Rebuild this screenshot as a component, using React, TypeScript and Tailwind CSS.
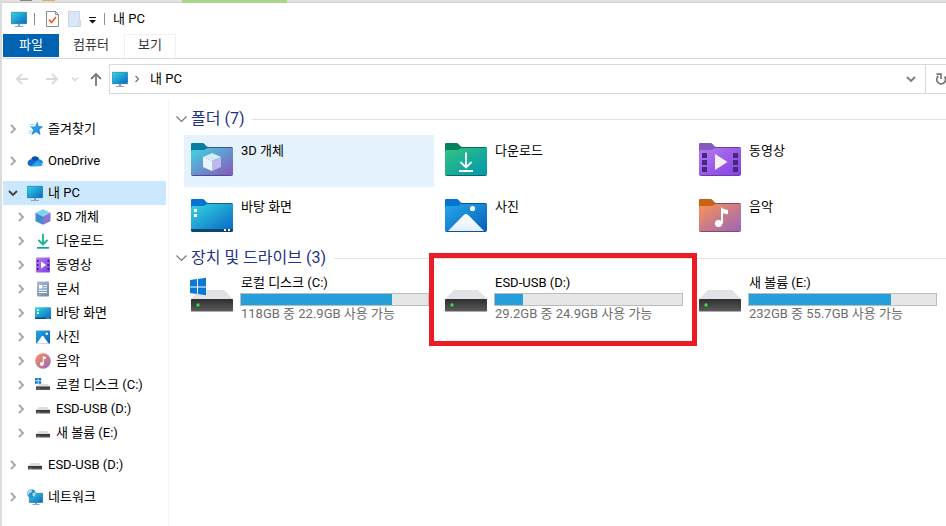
import type { ReactNode } from 'react'

type IconProps = { className?: string }

function Gradients() {
  const stops: [string, string, string][] = [
    ['g-screen', '#33d6e4', '#0a66c2'],
    ['g-3d', '#3fd6e0', '#8a55bd'],
    ['g-down', '#33c481', '#0098ad'],
    ['g-video', '#b47af2', '#8440e2'],
    ['g-photo', '#27a8ea', '#0560bb'],
    ['g-music', '#fb9355', '#9a66bb'],
    ['g-doc', '#a9bed3', '#6a88a6'],
    ['g-star', '#3fb8f5', '#0f7fe0'],
  ]
  return (
    <svg className="absolute h-0 w-0" aria-hidden="true">
      <defs>
        {stops.map(([id, from, to]) => (
          <linearGradient key={id} id={id} x1="0" y1="0" x2="1" y2="1">
            <stop offset="0" stopColor={from} />
            <stop offset="1" stopColor={to} />
          </linearGradient>
        ))}
        <linearGradient id="g-drive" x1="0" y1="0" x2="0" y2="1">
          <stop offset="0" stopColor="#2e2e2e" />
          <stop offset="1" stopColor="#5c5c5c" />
        </linearGradient>
        <linearGradient id="g-snow" x1="0" y1="0" x2="0" y2="1">
          <stop offset="0" stopColor="#ffffff" />
          <stop offset="1" stopColor="#e3effc" />
        </linearGradient>
      </defs>
    </svg>
  )
}

function Small({ children }: { children: ReactNode }) {
  return (
    <svg viewBox="0 0 16 16" className="h-4 w-4 shrink-0" aria-hidden="true">
      {children}
    </svg>
  )
}

const MonitorIcon = () => (
  <Small>
    <path d="M4 15h8v1H4zM7 13h2v2H7z" fill="#8fa3b5" />
    <rect x="0.3" y="1.3" width="15.4" height="11.4" rx="0.6" fill="url(#g-screen)" stroke="#0f6f9e" strokeWidth="0.6" />
  </Small>
)

const StarIcon = () => (
  <Small>
    <path d="M10.4 1.3l.9 4.2 4.2.3-3.4 2.7 1 5-4-2.7-4.2 2.7 1.6-4.6-2.2-2.6 4-.5z" fill="url(#g-star)" stroke="#1676cf" strokeWidth="0.6" />
    <path d="M3.5 3.5h4M3 5.5h3.5M2 10h3M1.5 12h3" stroke="#6cc4f5" strokeWidth="0.8" />
  </Small>
)

const CloudIcon = () => (
  <Small>
    <path d="M4 6.3A4.4 4.4 0 0 1 12.3 6.2L8 9z" fill="#0a4fa6" />
    <path d="M3.2 13.2A3.4 3.4 0 1 1 5.3 6.4L12 11l-3 2.2z" fill="#1069cf" />
    <path d="M8.5 8.4c1.2-1.5 2.8-2.6 4-2.1 2 .3 3.5 1.7 3.5 3.6l-3 1.5z" fill="#1a8be0" />
    <path d="M3.2 13.2L9.2 8.9c1-.6 1.9-.2 2.5.2l4.1 2.4c-.4 1.1-1.4 1.7-2.6 1.7z" fill="#2aa5ee" />
  </Small>
)

const CubeIcon = () => (
  <Small>
    <path d="M8 0.3l7.5 3.4L8 7.4.5 3.7z" fill="#7fd3ee" />
    <path d="M.5 3.7L8 7.4v8.3L.5 12.2z" fill="#3b8fd0" />
    <path d="M15.5 3.7L8 7.4v8.3l7.5-3.5z" fill="#8a78cf" />
  </Small>
)

const DownloadIcon = () => (
  <Small>
    <path d="M8 .8v10.4M3.4 7l4.6 4.5L12.6 7" fill="none" stroke="#1bb196" strokeWidth="1.8" />
    <path d="M2 14h12v1.7H2z" fill="#14a39c" />
  </Small>
)

const VideoIcon = () => (
  <Small>
    <rect x="1" y="0.5" width="14" height="15" rx="0.8" fill="url(#g-video)" />
    <path d="M2 3h1.500v2H2zM2 7h1.500v2H2zM2 11h1.500v2H2zM12.500 3H14v2h-1.500zM12.500 7H14v2h-1.500zM12.500 11H14v2h-1.500z" fill="#3c2370" />
    <path d="M6 4.6l5.2 3.4L6 11.4z" fill="#fff" />
  </Small>
)

const DocumentIcon = () => (
  <Small>
    <rect x="2" y="0.5" width="12" height="15" rx="0.8" fill="url(#g-doc)" />
    <path d="M4 4h3.5v3.5H4zM8.5 4H12v1H8.5zM8.5 6.3H12v1H8.5zM4 8.8h8v1H4zM4 11h8v1H4z" fill="#fff" />
  </Small>
)

const DesktopIcon = () => (
  <Small>
    <rect x="0" y="2.3" width="16" height="11.7" rx="0.6" fill="url(#g-screen)" />
    <path d="M2 4.3h1.8v1.6H2zM2 7.3h1.8v1.6H2z" fill="#fff" />
    <path d="M0 12.6h16v1a.5.5 0 0 1-.5.5H.5a.5.5 0 0 1-.5-.5z" fill="#0b4f7e" />
    <path d="M11.5 12.8h1v.8h-1zM13.5 12.8h1v.8h-1z" fill="#fff" />
  </Small>
)

const PhotoIcon = () => (
  <Small>
    <rect x="1" y="1.5" width="14" height="13" rx="0.5" fill="url(#g-photo)" />
    <path d="M1.6 14.5L6.8 7.2q.8-.8 1.6 0l5.2 7.3z" fill="#fff" />
    <circle cx="11.8" cy="4.7" r="1.2" fill="#fff" />
  </Small>
)

const MusicIcon = () => (
  <Small>
    <circle cx="8" cy="8" r="7.8" fill="url(#g-music)" />
    <circle cx="6.8" cy="11" r="1.9" fill="#fff" />
    <path d="M7.8 3l3.1 1.3v2L8.8 5.5V11h-1z" fill="#fff" />
  </Small>
)

const DriveIcon = () => (
  <Small>
    <path d="M4 6h8l3 3H1z" fill="#dcdde1" />
    <rect x="1" y="9" width="14" height="3.6" rx="0.3" fill="url(#g-drive)" />
    <rect x="3" y="10.6" width="1.2" height="1.2" fill="#3fe03f" />
  </Small>
)

const SystemDriveIcon = () => (
  <Small>
    <path d="M4 7h9l2 2.4H1z" fill="#dcdde1" />
    <rect x="1" y="9.4" width="14" height="3.6" rx="0.3" fill="url(#g-drive)" />
    <rect x="3" y="11" width="1.2" height="1.2" fill="#3fe03f" />
    <path d="M0 1h2.7v2.5H0zM3.4 1h2.8v2.5H3.4zM0 4.2h2.7v2.5H0zM3.4 4.2h2.8v2.5H3.4z" fill="#0a78d4" />
  </Small>
)

const NetworkIcon = () => (
  <Small>
    <path d="M5.5 15h7v1h-7zM8 13.5h2V15H8z" fill="#8fa3b5" />
    <rect x="2.3" y="4.3" width="13.4" height="9.2" rx="0.5" fill="url(#g-screen)" stroke="#0f6f9e" strokeWidth="0.6" />
    <circle cx="4.5" cy="4.5" r="4.3" fill="#2a8fc4" />
    <path d="M1 2.5c1.2-1.5 3-2.2 4.3-1.9L4.6 3l-2 1.2L1.2 6.4C.2 5 .4 3.5 1 2.5zM6 3.5l2.6.3c.1 1.8-.5 3.2-1.8 4.2L5.2 6z" fill="#a7dcef" />
  </Small>
)

function Chevron({ dir, className }: { dir: 'right' | 'down' } & IconProps) {
  return (
    <svg viewBox="0 0 10 10" className={`h-[10px] w-[10px] shrink-0 ${className}`} aria-hidden="true">
      <path d={dir === 'right' ? 'M3 1l4 4-4 4' : 'M1 3l4 4 4-4'} fill="none" stroke="currentColor" strokeWidth="1.8" />
    </svg>
  )
}

function Folder({ fill, back, edge, children }: { fill: string; back: string; edge: string; children: ReactNode }) {
  return (
    <svg viewBox="0 0 42 33" className="h-[33px] w-[42px] shrink-0" aria-hidden="true">
      <path d="M0 1.5A1.5 1.5 0 0 1 1.5 0H11c3 0 3.5 4 6 4h23.5A1.5 1.5 0 0 1 42 5.5V31a2 2 0 0 1-2 2H2a2 2 0 0 1-2-2z" fill={edge} />
      <path d="M0 1.5A1.5 1.5 0 0 1 1.5 0H11c3 0 3.5 4 6 4L14 8H0z" fill={back} />
      <path d="M0 8.5Q0 7 1.5 7H12c2.5 0 3-2 5.5-2H41q1 0 1 1v24.5q0 1.500-1.500 1.500h-39Q0 32 0 30.500z" fill={fill} />
      {children}
    </svg>
  )
}

const folders = [
  {
    name: '3D 개체',
    selected: true,
    icon: (
      <Folder fill="url(#g-3d)" back="#067f9e" edge="#44508c">
        <path d="M21 10l9 4-9 4-9-4z" fill="#d3ecf8" />
        <path d="M12 14l9 4v10l-9-4z" fill="#eaf4fc" />
        <path d="M30 14l-9 4v10l9-4z" fill="#bdb8ec" />
      </Folder>
    ),
  },
  {
    name: '다운로드',
    icon: (
      <Folder fill="url(#g-down)" back="#05805a" edge="#08695f">
        <path d="M21 9.5V24M15.5 19l5.5 5.5 5.5-5.5" fill="none" stroke="#fff" strokeWidth="1.8" />
        <path d="M14 27h14v2H14z" fill="#fff" />
      </Folder>
    ),
  },
  {
    name: '동영상',
    icon: (
      <Folder fill="url(#g-video)" back="#8459bd" edge="#6a3fac">
        <path d="M3 10h5v5H3zM3 17h5v5H3zM3 24h5v5H3zM34 10h5v5h-5zM34 17h5v5h-5zM34 24h5v5h-5z" fill="#44287c" />
        <path d="M16 11l12.5 8L16 27z" fill="#f3f0f6" />
      </Folder>
    ),
  },
  {
    name: '바탕 화면',
    icon: (
      <Folder fill="url(#g-screen)" back="#0474cf" edge="#0b5fa0">
        <path d="M0 30h42v1a2 2 0 0 1-2 2H2a2 2 0 0 1-2-2z" fill="#0b4771" />
        <path d="M3 10h3v3H3zM3 15h3v3H3zM33 30h2v2h-2zM37 30h2v2h-2z" fill="#fff" />
      </Folder>
    ),
  },
  {
    name: '사진',
    icon: (
      <Folder fill="url(#g-photo)" back="#0474cf" edge="#0a549c">
        <path d="M3 32L18.8 16q2.200-2 4.400 0L39 32z" fill="url(#g-snow)" />
        <circle cx="27.5" cy="9.5" r="2.6" fill="#fff" />
      </Folder>
    ),
  },
  {
    name: '음악',
    icon: (
      <Folder fill="url(#g-music)" back="#c76312" edge="#86496b">
        <circle cx="19.5" cy="24.5" r="3.6" fill="#fff" />
        <path d="M22 8c1 1.5 4 2.5 7 3v4.5c-2-.8-3.500-1-5-1v10h-2z" fill="#fff" />
      </Folder>
    ),
  },
]

const drives = [
  { name: '로컬 디스크 (C:)', usage: '118GB 중 22.9GB 사용 가능', used: 81, system: true },
  { name: 'ESD-USB (D:)', usage: '29.2GB 중 24.9GB 사용 가능', used: 15, marked: true },
  { name: '새 볼륨 (E:)', usage: '232GB 중 55.7GB 사용 가능', used: 76 },
]

function BigDrive({ system }: { system?: boolean }) {
  return (
    <svg viewBox="0 0 42 36" className="mt-[2px] h-9 w-[42px] shrink-0 overflow-visible" aria-hidden="true">
      <path d="M9 13h24l9 9H0z" fill="#e1e2e6" />
      <rect x="0" y="22" width="42" height="12.5" rx="0.8" fill="url(#g-drive)" />
      <circle cx="7" cy="28" r="1.7" fill="#35e135" />
      {system && <path d="M-1 3l7-1v7.500h-7zM7 1.900L15 .8v8.700H7zM-1 10.500h7V17l-7-1zM7 10.500h8v7.700l-8-1.100z" fill="#0a78d7" />}
    </svg>
  )
}

type Place = { name: string; icon: ReactNode; open?: boolean; child?: boolean }

const places: Place[][] = [
  [{ name: '즐겨찾기', icon: <StarIcon /> }],
  [{ name: 'OneDrive', icon: <CloudIcon /> }],
  [
    { name: '내 PC', icon: <MonitorIcon />, open: true },
    { name: '3D 개체', icon: <CubeIcon />, child: true },
    { name: '다운로드', icon: <DownloadIcon />, child: true },
    { name: '동영상', icon: <VideoIcon />, child: true },
    { name: '문서', icon: <DocumentIcon />, child: true },
    { name: '바탕 화면', icon: <DesktopIcon />, child: true },
    { name: '사진', icon: <PhotoIcon />, child: true },
    { name: '음악', icon: <MusicIcon />, child: true },
    { name: '로컬 디스크 (C:)', icon: <SystemDriveIcon />, child: true },
    { name: 'ESD-USB (D:)', icon: <DriveIcon />, child: true },
    { name: '새 볼륨 (E:)', icon: <DriveIcon />, child: true },
  ],
  [{ name: 'ESD-USB (D:)', icon: <DriveIcon /> }],
  [{ name: '네트워크', icon: <NetworkIcon /> }],
]

function TitleBar() {
  return (
    <header className="flex h-[31px] items-center pl-[9px]">
      <MonitorIcon />
      <span className="ml-[7px] h-3 w-px bg-[#8f8f8f]" />
      <button type="button" aria-label="속성" className="ml-[11px]">
        <svg viewBox="0 0 13 16" className="h-4 w-[13px]" aria-hidden="true">
          <path d="M.5.5h9l3 3v12H.5z" fill="#fdfdfd" stroke="#8c8c8c" />
          <path d="M9.5.5v3h3" fill="none" stroke="#8c8c8c" />
          <path d="M3 8.5l2.5 3L10 6" fill="none" stroke="#e8622c" strokeWidth="1.7" />
        </svg>
      </button>
      <button type="button" aria-label="새 폴더" className="ml-[9px]">
        <svg viewBox="0 0 13 16" className="h-4 w-[13px]" aria-hidden="true">
          <path d="M.5.5h11v9h1v6H.5z" fill="#dce7f6" stroke="#c9d7ec" />
          <path d="M10.5 9.5v6" stroke="#c3d1e8" />
        </svg>
      </button>
      <button type="button" aria-label="빠른 실행 도구 모음 사용자 지정" className="ml-2">
        <svg viewBox="0 0 7 8" className="mt-[3px] h-2 w-[7px]" aria-hidden="true">
          <path d="M0 1h7v1H0zM0 4h7L3.5 7.5z" fill="#111" />
        </svg>
      </button>
      <span className="ml-2 h-3 w-px bg-[#8f8f8f]" />
      <h1 className="ml-2">내 PC</h1>
    </header>
  )
}

function Ribbon() {
  return (
    <nav className="ml-px flex h-[25px] border-b border-[#dadada]">
      <button type="button" className="h-[23px] w-14 bg-[#0063b1] pb-px text-white">파일</button>
      <button type="button" className="h-[23px] w-16 pb-px text-[#333]">컴퓨터</button>
      <button type="button" className="ml-px h-6 w-[52px] border border-b-0 border-[#f0f0f0] pb-[3px] text-[#333]">보기</button>
    </nav>
  )
}

function Arrow({ d, label, className }: { d: string; label: string; className: string }) {
  return (
    <button type="button" aria-label={label} className={className}>
      <svg viewBox="0 0 14 14" className="h-[14px] w-[14px]" aria-hidden="true">
        <path d={d} fill="none" stroke="currentColor" strokeWidth="1.8" />
      </svg>
    </button>
  )
}

function AddressRow() {
  return (
    <div className="mt-[5px] flex h-[30px] items-center overflow-hidden">
      <Arrow label="뒤로" d="M13 7H2M7 2L2 7l5 5" className="ml-[13px] text-[#d9d9d9]" />
      <Arrow label="앞으로" d="M1 7h11M7 2l5 5-5 5" className="ml-4 text-[#d9d9d9]" />
      <button type="button" aria-label="최근 위치" className="ml-3">
        <svg viewBox="0 0 8 8" className="h-2 w-2 text-[#d9d9d9]" aria-hidden="true">
          <path d="M1 2.5l3 3 3-3" fill="none" stroke="currentColor" strokeWidth="1.6" />
        </svg>
      </button>
      <Arrow label="위로" d="M7 14V2M2 7l5-5 5 5" className="ml-[10px] text-[#7b7b7b]" />
      <div className="ml-[6px] flex h-[30px] flex-1 items-center border border-r-0 border-[#d9d9d9]">
        <button type="button" aria-label="위치" className="ml-[2px]">
          <MonitorIcon />
        </button>
        <Chevron dir="right" className="ml-1 scale-75 text-[#7b7b7b]" />
        <button type="button" className="ml-2">내 PC</button>
        <button type="button" aria-label="이전 위치" className="mr-[9px] ml-auto">
          <Chevron dir="down" className="text-[#7b7b7b]" />
        </button>
        <button type="button" aria-label="새로 고침" className="flex h-full w-[21px] items-center overflow-hidden border-l border-[#d9d9d9] pl-[9px]">
          <svg viewBox="0 0 12 12" className="h-3 w-3 shrink-0" aria-hidden="true">
            <path d="M3.4 3A4.4 4.4 0 1 0 9.500 3.600" fill="none" stroke="#777" strokeWidth="1.7" />
            <path d="M1.500 1.200h4.500V6" fill="none" stroke="#777" strokeWidth="1.7" />
          </svg>
        </button>
      </div>
    </div>
  )
}

function Sidebar() {
  return (
    <aside className="mt-[6px] flex w-[167px] shrink-0 flex-col gap-2 border-r border-[#f3f3f3] pt-[17px] pr-[2px] pl-px">
      {places.map((group, i) => (
        <ul key={i}>
          {group.map((item) => (
            <li
              key={item.name}
              className={`flex h-6 items-center ${item.child ? 'pl-[13px]' : 'pl-[5px]'} ${item.open ? 'bg-[#cce8ff]' : ''}`}
            >
              <button type="button" aria-label={item.open ? '축소' : '확장'}>
                <Chevron dir={item.open ? 'down' : 'right'} className={item.open ? 'text-[#404040]' : 'text-[#a6a6a6]'} />
              </button>
              <button type="button" className="ml-[9px] flex items-center gap-[5px] whitespace-nowrap">
                {item.icon}
                {item.name}
              </button>
            </li>
          ))}
        </ul>
      ))}
    </aside>
  )
}

function SectionHeader({ title }: { title: string }) {
  return (
    <div className="mb-1 flex h-6 items-center">
      <button type="button" className="flex items-center gap-1 text-[#1e3287]">
        <svg viewBox="0 0 11 8" className="h-2 w-[11px]" aria-hidden="true">
          <path d="M.5 1.5l5 5 5-5" fill="none" stroke="#777" strokeWidth="1.2" />
        </svg>
        <h2 className="text-base leading-6">{title}</h2>
      </button>
      <span className="ml-2 h-px flex-1 bg-[#e2e2e2]" />
    </div>
  )
}

export default function App() {
  return (
    <div className="flex min-h-screen flex-col overflow-hidden bg-[#dcdcdc] pl-[2px] font-['Roboto','Noto_Sans_CJK_KR',sans-serif] text-[13px] leading-4 text-black">
      <Gradients />
      <div className="flex h-[3px] bg-linear-to-b from-[#e6e6e6] to-[#d2d2d2]">
        <span className="ml-[18px] h-px w-3 bg-[#858585]" />
        <span className="ml-[10px] h-px w-[13px] bg-[#dcb54a]" />
        <span className="ml-[127px] w-[105px] bg-[#a9d58a]" />
      </div>
      <div className="flex flex-1 flex-col bg-white">
        <TitleBar />
        <Ribbon />
        <AddressRow />
        <div className="flex flex-1">
          <Sidebar />
          <main className="flex min-w-0 flex-1 flex-col gap-[3px] pt-[13px] pl-[7px]">
            <section>
              <SectionHeader title="폴더 (7)" />
              <ul className="grid grid-cols-[repeat(auto-fill,250px)] gap-1 pl-2">
                {folders.map((f) => (
                  <li key={f.name}>
                    <button
                      type="button"
                      className={`flex h-[52px] w-full items-start gap-2 px-[7px] pt-2 ${f.selected ? 'bg-[#e5f3ff]' : ''}`}
                    >
                      {f.icon}
                      {f.name}
                    </button>
                  </li>
                ))}
              </ul>
            </section>
            <section>
              <SectionHeader title="장치 및 드라이브 (3)" />
              <ul className="grid grid-cols-[repeat(auto-fill,250px)] gap-1 pl-2">
                {drives.map((d) => (
                  <li key={d.name} className="relative">
                    <button type="button" className="flex h-[52px] w-full items-start gap-[7px] pt-px pr-[5px] pl-[7px] text-left">
                      <BigDrive system={d.system} />
                      <span className="flex-1">
                        <span className="block pl-px">{d.name}</span>
                        <span
                          role="progressbar"
                          aria-label={d.name}
                          aria-valuenow={d.used}
                          className="mt-[2px] block h-[13px] border border-[#bcbcbc] bg-[#e6e6e6]"
                        >
                          <span className="block h-full bg-[#26a0da]" style={{ width: `${d.used}%` }} />
                        </span>
                        <span className="block pl-px text-[#6d6d6d]">{d.usage}</span>
                      </span>
                    </button>
                    {d.marked && (
                      <span className="pointer-events-none absolute -inset-x-[9px] -top-[21px] -bottom-5 z-10 border-5 border-[#ed1c24]" />
                    )}
                  </li>
                ))}
              </ul>
            </section>
          </main>
        </div>
      </div>
    </div>
  )
}
